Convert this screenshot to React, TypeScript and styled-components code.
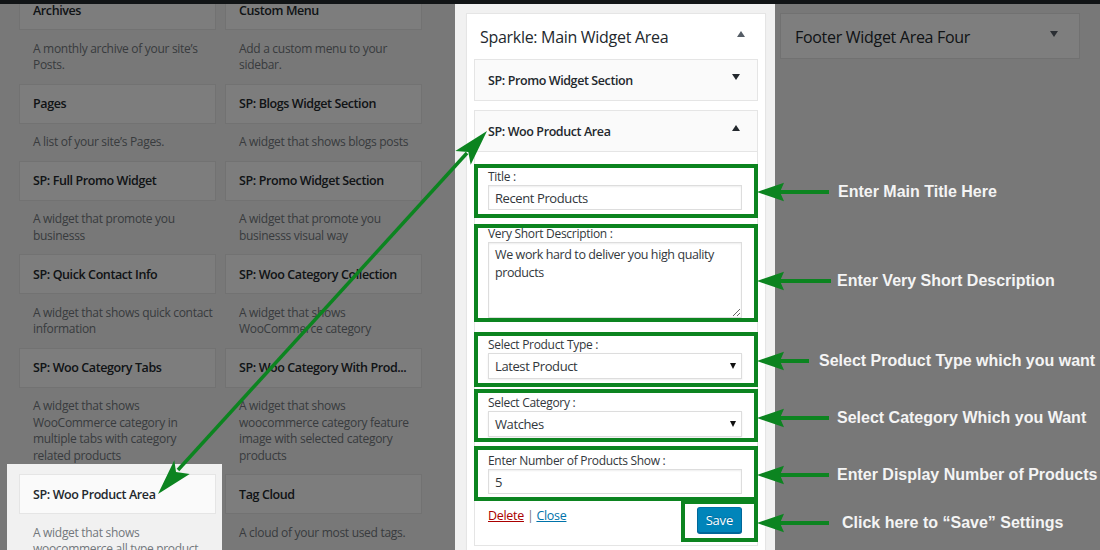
import React from "react";
import styled, { createGlobalStyle } from "styled-components";

const GREEN = "#0c8420";

const Global = createGlobalStyle`
  html, body { margin: 0; padding: 0; }
  body {
    width: 1100px; height: 550px; overflow: hidden;
    background: #f1f1f1;
    font-family: "Open Sans", "Noto Sans", sans-serif;
    color: #23282d;
  }
  #root { width: 1100px; height: 550px; }
`;

const Page = styled.div`
  position: relative;
  width: 1100px;
  height: 550px;
  overflow: hidden;
  display: flex;
  flex-direction: column;
  background: #f1f1f1;
`;

const AdminBar = styled.div`
  flex: none;
  height: 4px;
  background: #23282d;
`;

const Main = styled.div`
  flex: 1;
  display: flex;
  min-height: 0;
`;

const Available = styled.section`
  flex: none;
  width: 455px;
  box-sizing: border-box;
  padding-left: 19px;
  overflow: hidden;
`;

const WidgetGrid = styled.div`
  display: grid;
  grid-template-columns: 197px 197px;
  column-gap: 9px;
  align-items: start;
  margin-top: -14px; /* list is scrolled */
`;

const WidgetItem = styled.div<{ $spot?: boolean }>`
  position: relative;
  ${(p) =>
    p.$spot &&
    `
    z-index: 2;
    &::before {
      content: "";
      position: absolute;
      inset: -10px -6px -200px -12px;
      background: #f1f1f1;
      z-index: -1;
    }
  `}
`;

const WidgetTop = styled.div`
  height: 40px;
  box-sizing: border-box;
  border: 1px solid #e5e5e5;
  background: #fafafa;
  padding: 0 12px 0 13px;
  display: flex;
  align-items: center;
  font-size: 12.5px;
  letter-spacing: -0.4px;
  font-weight: 600;
  color: #23282d;
  white-space: nowrap;
  overflow: hidden;
`;

const WidgetDesc = styled.div`
  padding: 10.5px 10px 10px 14px;
  font-size: 12px;
  letter-spacing: -0.3px;
  line-height: 16.5px;
  color: #72777c;
`;

const Line = styled.span`
  display: block;
  white-space: nowrap;
`;

const SidebarColumn = styled.section`
  position: relative;
  z-index: 2;
  flex: none;
  width: 320px;
  box-sizing: border-box;
  padding: 9px 9px 0 11px;
  background: #f1f1f1;
`;

const Panel = styled.div`
  border: 1px solid #e5e5e5;
  background: #fff;
  padding: 0 7px 12px;
  box-shadow: 0 1px 1px rgba(0, 0, 0, 0.04);
`;

const PanelHead = styled.div`
  height: 44px;
  display: flex;
  align-items: center;
  justify-content: space-between;
  padding: 1px 13px 0 6px;
`;

const PanelTitle = styled.h2`
  margin: 0;
  font-size: 16px;
  letter-spacing: -0.3px;
  font-weight: 400;
  color: #23282d;
`;

const Caret = styled.span<{ $up?: boolean; $dark?: boolean }>`
  width: 0;
  height: 0;
  border-left: 4.5px solid transparent;
  border-right: 4.5px solid transparent;
  ${(p) =>
    p.$up
      ? `border-bottom: 6px solid ${p.$dark ? "#23282d" : "#555d66"};`
      : `border-top: 6px solid ${p.$dark ? "#23282d" : "#555d66"};`}
  transform: translateY(-3px);
`;

const Widget = styled.div`
  border: 1px solid #e5e5e5;
  background: #fff;
  & + & { margin-top: 9px; }
`;

const WidgetHead = styled.div<{ $open?: boolean }>`
  height: 40px;
  display: flex;
  align-items: center;
  justify-content: space-between;
  padding: 0 17px 0 13px;
  background: #fafafa;
  font-size: 12.5px;
  letter-spacing: -0.4px;
  font-weight: 600;
  color: #23282d;
  ${(p) => p.$open && `border-bottom: 1px solid #e5e5e5;`}
`;

const WidgetBody = styled.div`
  padding: 17px 15px 12px 13px;
  display: flex;
  flex-direction: column;
`;

const Field = styled.div<{ $extra?: number }>`
  position: relative;
  display: flex;
  flex-direction: column;
  & + & { margin-top: 16px; }
  padding-bottom: ${(p) => p.$extra ?? 0}px;
`;

const Label = styled.label`
  font-size: 12px;
  letter-spacing: -0.3px;
  line-height: 16px;
  color: #32373c;
`;

const TextInput = styled.input`
  box-sizing: border-box;
  width: 100%;
  height: 25px;
  margin: 0;
  border: 1px solid #ddd;
  box-shadow: inset 0 1px 2px rgba(0, 0, 0, 0.07);
  padding: 0 6px;
  font-family: inherit;
  font-size: 13px;
  letter-spacing: -0.4px;
  color: #32373c;
  background: #fff;
  outline: none;
`;

const TextArea = styled.textarea`
  box-sizing: border-box;
  display: block;
  width: 100%;
  height: 76px;
  margin: 0;
  border: 1px solid #ddd;
  box-shadow: inset 0 1px 2px rgba(0, 0, 0, 0.07);
  padding: 3px 6px;
  font-family: inherit;
  font-size: 12.5px;
  letter-spacing: -0.4px;
  line-height: 18px;
  color: #32373c;
  background: #fff;
  outline: none;
`;

const SelectBox = styled.div`
  box-sizing: border-box;
  height: 26px;
  border: 1px solid #ddd;
  box-shadow: 0 1px 2px rgba(0, 0, 0, 0.07);
  padding: 0 5px 0 6px;
  display: flex;
  align-items: center;
  justify-content: space-between;
  font-size: 13px;
  letter-spacing: -0.4px;
  color: #32373c;
  background: #fff;
`;

const SelectCaret = styled.span`
  width: 0;
  height: 0;
  border-left: 3.5px solid transparent;
  border-right: 3.5px solid transparent;
  border-top: 6px solid #111;
`;

const Highlight = styled.span<{ $inset: string }>`
  position: absolute;
  inset: ${(p) => p.$inset};
  border: 4px solid ${GREEN};
  pointer-events: none;
`;

const Callout = styled.span<{ $shift?: number; $gap: number }>`
  position: absolute;
  left: calc(100% + 3px);
  top: calc(50% + ${(p) => p.$shift ?? 0}px);
  transform: translateY(-50%);
  display: flex;
  align-items: center;
  gap: ${(p) => p.$gap}px;
  white-space: nowrap;
  font-family: "Liberation Sans", Arial, sans-serif;
  font-weight: 700;
  font-size: 16px;
  letter-spacing: 0;
  color: #f4f4f4;
`;

const Footer = styled.div`
  position: relative;
  margin-top: 13px;
  display: flex;
  justify-content: space-between;
  align-items: flex-start;
  font-size: 12.5px;
  letter-spacing: -0.3px;
  line-height: 16px;
  color: #72777c;
`;

const Links = styled.span`
  padding-top: 1px;
`;

const LinkText = styled.a<{ $danger?: boolean }>`
  color: ${(p) => (p.$danger ? "#a00" : "#0073aa")};
  text-decoration: underline;
`;

const SaveWrap = styled.div`
  position: relative;
`;

const SaveButton = styled.button`
  height: 26px;
  padding: 0 8px;
  border: 1px solid #0073aa;
  border-color: #0073aa #006799 #006799;
  border-radius: 3px;
  background: #0085ba;
  box-shadow: 0 1px 0 #006799;
  color: #fff;
  font-family: inherit;
  font-size: 13px;
  letter-spacing: -0.2px;
  text-shadow: 0 -1px 1px #006799;
`;

const RightColumn = styled.section`
  flex: 1;
  padding: 9px 0 0 5px;
`;

const SidebarCard = styled.div`
  width: 300px;
  height: 46px;
  box-sizing: border-box;
  border: 1px solid #e2e2e2;
  background: #fcfcfc;
  display: flex;
  align-items: center;
  justify-content: space-between;
  padding: 1px 21px 0 14px;
`;

const Dim = styled.div`
  position: absolute;
  inset: 0;
  background: rgba(0, 0, 0, 0.5);
  z-index: 1;
  pointer-events: none;
`;

const Overlay = styled.svg`
  position: absolute;
  left: 0;
  top: 0;
  z-index: 3;
  pointer-events: none;
`;

type Item = { title: string; desc: string[]; spot?: boolean };

const items: Item[] = [
  { title: "Archives", desc: ["A monthly archive of your site’s", "Posts."] },
  { title: "Custom Menu", desc: ["Add a custom menu to your", "sidebar."] },
  { title: "Pages", desc: ["A list of your site’s Pages."] },
  { title: "SP: Blogs Widget Section", desc: ["A widget that shows blogs posts"] },
  { title: "SP: Full Promo Widget", desc: ["A widget that promote you", "businesss"] },
  { title: "SP: Promo Widget Section", desc: ["A widget that promote you", "businesss visual way"] },
  { title: "SP: Quick Contact Info", desc: ["A widget that shows quick contact", "information"] },
  { title: "SP: Woo Category Collection", desc: ["A widget that shows", "WooCommerce category"] },
  {
    title: "SP: Woo Category Tabs",
    desc: ["A widget that shows", "WooCommerce category in", "multiple tabs with category", "related products"],
  },
  {
    title: "SP: Woo Category With Prod...",
    desc: ["A widget that shows", "woocommerce category feature", "image with selected category", "products"],
  },
  { title: "SP: Woo Product Area", desc: ["A widget that shows", "woocommerce all type product"], spot: true },
  { title: "Tag Cloud", desc: ["A cloud of your most used tags."] },
];

function CalloutArrow({ len }: { len: number }) {
  return (
    <svg width={len} height={20} viewBox={`0 0 ${len} 20`}>
      <rect x={20} y={8} width={len - 20} height={4} fill={GREEN} />
      <polygon points="0,10 27,0.8 23,10 27,19.2" fill={GREEN} />
    </svg>
  );
}

function Note({
  text,
  len = 72,
  gap = 8,
  shift,
}: {
  text: string;
  len?: number;
  gap?: number;
  shift?: number;
}) {
  return (
    <Callout $gap={gap} $shift={shift}>
      <CalloutArrow len={len} />
      {text}
    </Callout>
  );
}

export default function App() {
  return (
    <Page>
      <Global />
      <AdminBar />
      <Main>
        <Available>
          <WidgetGrid>
            {items.map((it) => (
              <WidgetItem key={it.title} $spot={it.spot}>
                <WidgetTop>{it.title}</WidgetTop>
                <WidgetDesc>
                  {it.desc.map((l) => (
                    <Line key={l}>{l}</Line>
                  ))}
                </WidgetDesc>
              </WidgetItem>
            ))}
          </WidgetGrid>
        </Available>

        <SidebarColumn>
          <Panel>
            <PanelHead>
              <PanelTitle>Sparkle: Main Widget Area</PanelTitle>
              <Caret $up />
            </PanelHead>
            <Widget>
              <WidgetHead>
                SP: Promo Widget Section
                <Caret $dark />
              </WidgetHead>
            </Widget>
            <Widget>
              <WidgetHead $open>
                SP: Woo Product Area
                <Caret $up $dark />
              </WidgetHead>
              <WidgetBody>
                <Field>
                  <Label>Title :</Label>
                  <TextInput readOnly value="Recent Products" />
                  <Highlight $inset="-5px -16px -8px -14px">
                    <Note text="Enter Main Title Here" len={72} gap={9} shift={1} />
                  </Highlight>
                </Field>
                <Field $extra={3}>
                  <Label>Very Short Description :</Label>
                  <TextArea readOnly value="We work hard to deliver you high quality products" />
                  <Highlight $inset="-2px -16px -1px -14px">
                    <Note text="Enter Very Short Description" len={74} gap={6} shift={8} />
                  </Highlight>
                </Field>
                <Field>
                  <Label>Select Product Type :</Label>
                  <SelectBox>
                    Latest Product
                    <SelectCaret />
                  </SelectBox>
                  <Highlight $inset="-5px -16px -8px -14px">
                    <Note text="Select Product Type which you want" len={52} gap={10} shift={1} />
                  </Highlight>
                </Field>
                <Field>
                  <Label>Select Category :</Label>
                  <SelectBox>
                    Watches
                    <SelectCaret />
                  </SelectBox>
                  <Highlight $inset="-6px -16px -5px -14px">
                    <Note text="Select Category Which you Want" len={72} gap={8} shift={2} />
                  </Highlight>
                </Field>
                <Field>
                  <Label>Enter Number of Products Show :</Label>
                  <TextInput readOnly value="5" />
                  <Highlight $inset="-7px -16px -7px -14px">
                    <Note text="Enter Display Number of Products" len={72} gap={8} shift={1} />
                  </Highlight>
                </Field>
                <Footer>
                  <Links>
                    <LinkText $danger>Delete</LinkText> | <LinkText>Close</LinkText>
                  </Links>
                  <SaveWrap>
                    <SaveButton>Save</SaveButton>
                    <Highlight $inset="-7px -16px -9px -16px">
                      <Note text="Click here to “Save” Settings" len={72} gap={13} shift={2} />
                    </Highlight>
                  </SaveWrap>
                </Footer>
              </WidgetBody>
            </Widget>
          </Panel>
        </SidebarColumn>

        <RightColumn>
          <SidebarCard>
            <PanelTitle>Footer Widget Area Four</PanelTitle>
            <Caret />
          </SidebarCard>
        </RightColumn>
      </Main>

      <Dim />

      <Overlay width={1100} height={550} viewBox="0 0 1100 550">
        <line x1={178} y1={470} x2={467} y2={153} stroke={GREEN} strokeWidth={3.5} />
        <polygon points="158,494 189.7,474.1 176,472 174.3,460.3" fill={GREEN} />
        <polygon points="487,131 470.7,164.7 468.3,152 455.3,150.9" fill={GREEN} />
      </Overlay>
    </Page>
  );
}
